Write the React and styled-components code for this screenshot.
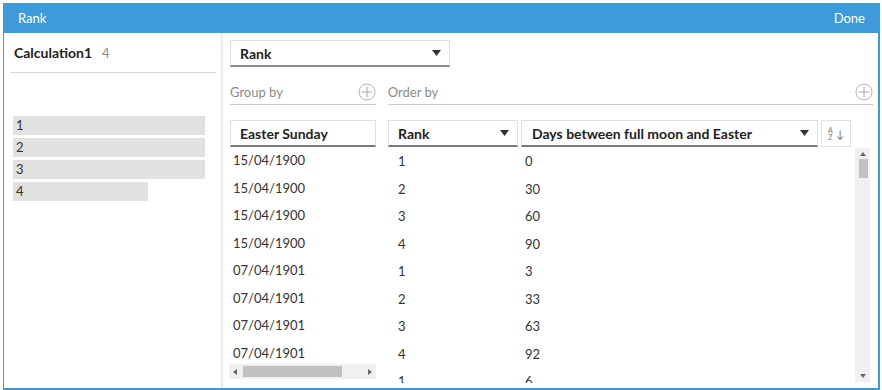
import React from 'react';
import styled, { createGlobalStyle } from 'styled-components';

const GlobalStyle = createGlobalStyle`
  html, body { margin: 0; padding: 0; background: #fff; }
  body { font-family: Lato, "Noto Sans", sans-serif; color: #333; }
`;

// data
const groups = [
  { label: '1', wide: true },
  { label: '2', wide: true },
  { label: '3', wide: true },
  { label: '4', wide: false },
];

const rows = [
  ['15/04/1900', '1', '0'],
  ['15/04/1900', '2', '30'],
  ['15/04/1900', '3', '60'],
  ['15/04/1900', '4', '90'],
  ['07/04/1901', '1', '3'],
  ['07/04/1901', '2', '33'],
  ['07/04/1901', '3', '63'],
  ['07/04/1901', '4', '92'],
  ['30/03/1902', '1', '6'],
];

// styled components

const Frame = styled.div`
  margin: 3px 0 0 3px;
  width: 874px;
  height: 385px;
  border: 1px solid #3d9ad9;
  border-width: 0 2px 2px 1px;
  display: flex;
  flex-direction: column;
  overflow: hidden;
`;

const Header = styled.div`
  height: 30px;
  flex: none;
  background: #3e9bdb;
  color: #fff;
  font-size: 13px;
  display: flex;
  align-items: center;
  justify-content: space-between;
  padding: 0 13px 0 14px;
`;

const Body = styled.div`
  flex: 1;
  display: flex;
  min-height: 0;
`;

const LeftPane = styled.div`
  width: 217px;
  flex: none;
  border-right: 2px solid #ececec;
`;

const CalcTitle = styled.div`
  margin: 0 5px 0 7px;
  height: 39px;
  border-bottom: 1px solid #d6d6d6;
  display: flex;
  align-items: center;
  padding-left: 3px;
  font-size: 14px;
  font-weight: 700;
  color: #222;
`;

const Count = styled.span`
  font-weight: 400;
  font-size: 13px;
  color: #888;
  margin-left: 10px;
`;

const BarList = styled.div`
  margin: 43px 0 0 9px;
  display: flex;
  flex-direction: column;
  gap: 3px;
`;

const Bar = styled.div`
  width: ${p => (p.$wide ? '192px' : '135px')};
  height: 19px;
  background: #e1e1e1;
  font-size: 13px;
  line-height: 19px;
  padding-left: 3px;
  box-sizing: border-box;
  color: #333;
`;

const RightPane = styled.div`
  flex: 1;
  padding: 7px 5px 0 7px;
  display: flex;
  flex-direction: column;
  min-width: 0;
`;

const Select = styled.div`
  width: 220px;
  height: 27px;
  box-sizing: border-box;
  border: 1px solid #dcdcdc;
  border-bottom: 2px solid #8c8c8c;
  display: flex;
  align-items: center;
  justify-content: space-between;
  padding: 0 8px 0 9px;
  font-size: 14px;
  font-weight: 700;
  color: #222;
`;

const FieldRow = styled.div`
  display: flex;
  gap: 12px;
  margin-top: 13px;
`;

const Field = styled.div`
  width: ${p => p.$w};
  height: 25px;
  box-sizing: border-box;
  border-bottom: 1px solid #c8c8c8;
  display: flex;
  align-items: center;
  justify-content: space-between;
  font-size: 13px;
  color: #8a8a8a;
  padding-bottom: 1px;
`;

const Tables = styled.div`
  display: flex;
  gap: 12px;
  margin-top: 15px;
  flex: 1;
  min-height: 0;
`;

const GroupCol = styled.div`
  width: 146px;
  display: flex;
  flex-direction: column;
`;

const OrderArea = styled.div`
  flex: 1;
  display: flex;
  flex-direction: column;
  min-width: 0;
`;

const HeadRow = styled.div`
  display: flex;
  gap: 3px;
  height: 27px;
  flex: none;
`;

const HeadCell = styled.div`
  width: ${p => p.$w};
  height: 27px;
  flex: none;
  box-sizing: border-box;
  border: 1px solid #e0e0e0;
  border-bottom: 2px solid #7a7a7a;
  display: flex;
  align-items: center;
  justify-content: space-between;
  padding: 0 8px 0 ${p => p.$pl || '9px'};
  font-size: 14px;
  font-weight: 700;
  color: #222;
  white-space: nowrap;
`;

const SortBox = styled.div`
  width: 30px;
  height: 27px;
  box-sizing: border-box;
  border: 1px solid #e0e0e0;
  display: flex;
  align-items: center;
  justify-content: center;
  gap: 3px;
  color: #777;
`;

const AZ = styled.div`
  display: flex;
  flex-direction: column;
  font-size: 7px;
  line-height: 7px;
  text-align: center;
`;

const Arrow = styled.span`
  font-size: 11px;
  line-height: 11px;
`;

const GroupRows = styled.div`
  height: 217px;
  overflow: hidden;
`;

const Cell = styled.div`
  height: 27.5px;
  line-height: 27px;
  font-size: 13px;
  color: #333;
  padding-left: ${p => p.$pl};
  width: ${p => p.$w || 'auto'};
  box-sizing: border-box;
  white-space: nowrap;
`;

const HScroll = styled.div`
  height: 15px;
  width: 147px;
  margin-left: -1px;
  background: #f0f0f0;
  display: flex;
  align-items: center;
  padding: 0 4px;
  box-sizing: border-box;
`;

const HThumb = styled.div`
  width: 99px;
  height: 11px;
  background: #c1c1c1;
  margin: 0 auto 0 6px;
`;

const GridBody = styled.div`
  flex: 1;
  display: flex;
  min-height: 0;
  margin-top: 1px;
  padding-bottom: 5px;
`;

const DataRows = styled.div`
  flex: 1;
  overflow: hidden;
`;

const DataRow = styled.div`
  display: flex;
`;

const VScroll = styled.div`
  width: 15px;
  margin: 0 3px 1px 6px;
  background: #f0f0f0;
  display: flex;
  flex-direction: column;
  align-items: center;
  padding: 4px 0;
  box-sizing: border-box;
`;

const VThumb = styled.div`
  width: 9px;
  height: 19px;
  background: #c1c1c1;
  margin-top: 3px;
  margin-left: 2px;
`;

const Spacer = styled.div`
  flex: 1;
`;

// icons

const Caret = () => (
  <svg width="9" height="6" viewBox="0 0 9 6">
    <path d="M0 0 H9 L4.5 6 Z" fill="#333" />
  </svg>
);

const SmallTri = ({ dir, color = '#666' }) => {
  const paths = {
    up: 'M0 4 L3 0 L6 4 Z',
    down: 'M0 0 H6 L3 4 Z',
    left: 'M4 0 V6 L0 3 Z',
    right: 'M0 0 V6 L4 3 Z',
  };
  const v = dir === 'up' || dir === 'down';
  return (
    <svg width={v ? 6 : 4} height={v ? 4 : 6} viewBox={v ? '0 0 6 4' : '0 0 4 6'}>
      <path d={paths[dir]} fill={color} />
    </svg>
  );
};

const PlusCircle = () => (
  <svg width="18" height="18" viewBox="0 0 18 18">
    <circle cx="9" cy="9" r="8" fill="none" stroke="#b5b5b5" strokeWidth="1" />
    <path d="M9 3.5 V14.5 M3.5 9 H14.5" stroke="#a8a8a8" strokeWidth="1" />
  </svg>
);

function App() {
  return (
    <>
      <GlobalStyle />
      <Frame>
        <Header>
          <span>Rank</span>
          <span>Done</span>
        </Header>
        <Body>
          {/* ----- left: calculation groups ----- */}
          <LeftPane>
            <CalcTitle>
              Calculation1<Count>4</Count>
            </CalcTitle>
            <BarList>
              {groups.map(g => (
                <Bar key={g.label} $wide={g.wide}>{g.label}</Bar>
              ))}
            </BarList>
          </LeftPane>

          {/* ----- right: rank settings and preview ----- */}
          <RightPane>
            <Select>
              Rank
              <Caret />
            </Select>
            <FieldRow>
              <Field $w="146px">
                Group by
                <PlusCircle />
              </Field>
              <Field $w="486px">
                Order by
                <PlusCircle />
              </Field>
            </FieldRow>
            <Tables>
              <GroupCol>
                <HeadCell $w="146px">Easter Sunday</HeadCell>
                <GroupRows>
                  {rows.map((r, i) => (
                    <Cell key={i} $pl="3px">{r[0]}</Cell>
                  ))}
                </GroupRows>
                <HScroll>
                  <SmallTri dir="left" />
                  <HThumb />
                  <SmallTri dir="right" />
                </HScroll>
              </GroupCol>
              <OrderArea>
                <HeadRow>
                  <HeadCell $w="130px">
                    Rank
                    <Caret />
                  </HeadCell>
                  <HeadCell $w="297px" $pl="10px">
                    Days between full moon and Easter
                    <Caret />
                  </HeadCell>
                  <SortBox>
                    <AZ>
                      <span>A</span>
                      <span>Z</span>
                    </AZ>
                    <Arrow>↓</Arrow>
                  </SortBox>
                </HeadRow>
                <GridBody>
                  <DataRows>
                    {rows.map((r, i) => (
                      <DataRow key={i}>
                        <Cell $w="133px" $pl="10px">{r[1]}</Cell>
                        <Cell $pl="4px">{r[2]}</Cell>
                      </DataRow>
                    ))}
                  </DataRows>
                  <VScroll>
                    <SmallTri dir="up" />
                    <VThumb />
                    <Spacer />
                    <SmallTri dir="down" />
                  </VScroll>
                </GridBody>
              </OrderArea>
            </Tables>
          </RightPane>
        </Body>
      </Frame>
    </>
  );
}

export default App;
